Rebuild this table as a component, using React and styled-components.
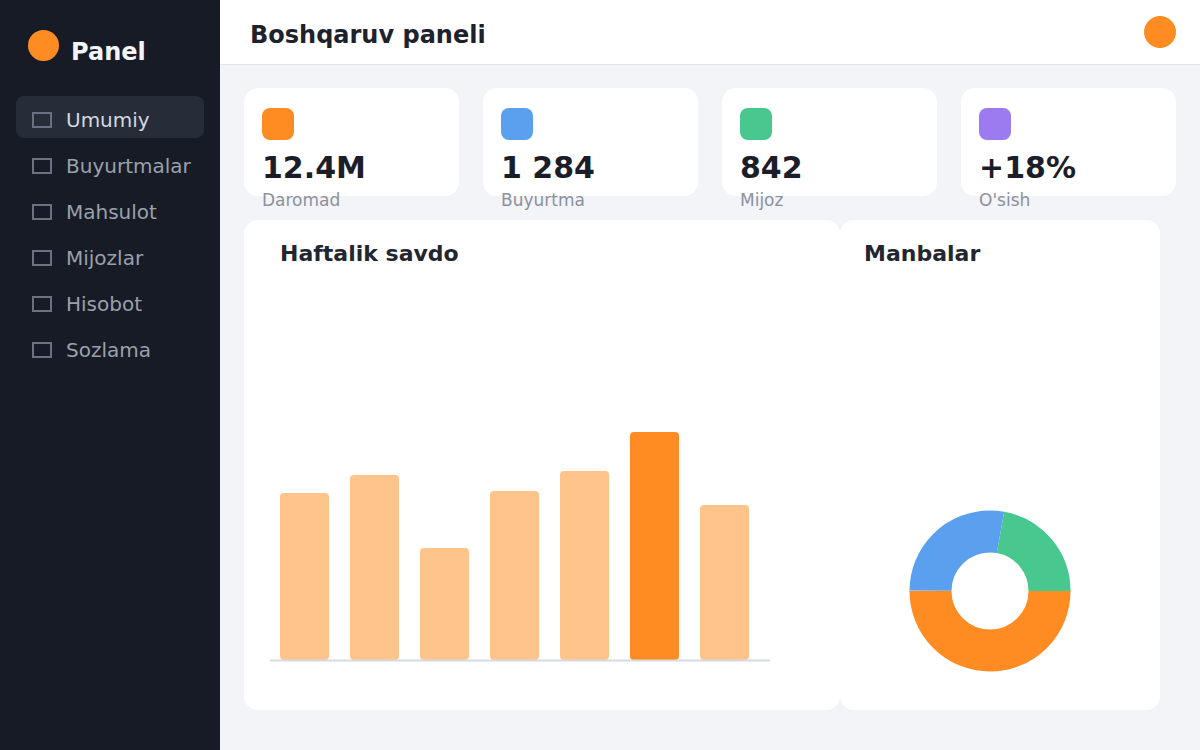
import React from "react";
import styled, { createGlobalStyle } from "styled-components";

const navItems = ["Umumiy", "Buyurtmalar", "Mahsulot", "Mijozlar", "Hisobot", "Sozlama"];

const stats = [
  { value: "12.4M", label: "Daromad", color: "#ff8c22" },
  { value: "1 284", label: "Buyurtma", color: "#5aa0ef" },
  { value: "842", label: "Mijoz", color: "#48c78e" },
  { value: "+18%", label: "O'sish", color: "#9b7bef" },
];

// bar tops measured against a 390px baseline
const bars = [167, 185, 112, 169, 189, 228, 155];
const HIGHLIGHT = 5;

const sources = [
  { share: 0.5, color: "#ff8c22" },
  { share: 0.277, color: "#5aa0ef" },
  { share: 0.223, color: "#48c78e" },
];

const App = () => {
  const radius = 59.5;
  const circ = 2 * Math.PI * radius;
  let start = 0;

  return (
    <>
      <GlobalStyle />
      <Shell>
        <Sidebar>
          <Brand>
            <BrandDot />
            <BrandName>Panel</BrandName>
          </Brand>
          <Nav>
            {navItems.map((item, i) => (
              <NavItem key={item} $active={i === 0}>
                <NavIcon />
                {item}
              </NavItem>
            ))}
          </Nav>
        </Sidebar>

        <Main>
          <Header>
            <Title>Boshqaruv paneli</Title>
            <Avatar />
          </Header>

          <Content>
            <StatGrid>
              {stats.map((s) => (
                <StatCard key={s.label}>
                  <StatIcon $color={s.color} />
                  <StatValue>{s.value}</StatValue>
                  <StatLabel>{s.label}</StatLabel>
                </StatCard>
              ))}
            </StatGrid>

            <ChartRow>
              <ChartCard>
                <ChartTitle $indent={36}>Haftalik savdo</ChartTitle>
                <BarChart width="510" height="392" viewBox="0 0 510 392">
                  {bars.map((h, i) => (
                    <rect
                      key={i}
                      x={10 + i * 70}
                      y={390 - h}
                      width="49"
                      height={h}
                      rx="4"
                      fill={i === HIGHLIGHT ? "#ff8c22" : "#fec48c"}
                    />
                  ))}
                  <line x1="0" y1="390.5" x2="500" y2="390.5" stroke="#d6d9e0" strokeWidth="2" />
                </BarChart>
              </ChartCard>

              <ChartCard>
                <ChartTitle $indent={24}>Manbalar</ChartTitle>
                <Donut width="170" height="170" viewBox="0 0 170 170">
                  {sources.map((s) => {
                    const len = s.share * circ;
                    const seg = (
                      <circle
                        key={s.color}
                        cx="85"
                        cy="85"
                        r={radius}
                        fill="none"
                        stroke={s.color}
                        strokeWidth="42"
                        strokeDasharray={`${len} ${circ}`}
                        strokeDashoffset={-start}
                      />
                    );
                    start += len;
                    return seg;
                  })}
                </Donut>
              </ChartCard>
            </ChartRow>
          </Content>
        </Main>
      </Shell>
    </>
  );
};

const GlobalStyle = createGlobalStyle`
  body {
    margin: 0;
    font-family: "DejaVu Sans", "Noto Sans", sans-serif;
    background: #f3f4f8;
  }
`;

const Shell = styled.div`
  display: flex;
  width: 1200px;
  height: 750px;
  overflow: hidden;
`;

const Sidebar = styled.aside`
  flex: none;
  width: 220px;
  background: #171b26;
  padding: 0 16px;
  box-sizing: border-box;
`;

const Brand = styled.div`
  display: flex;
  align-items: flex-start;
  padding: 30px 0 0 12px;
`;

const BrandDot = styled.div`
  width: 31px;
  height: 31px;
  border-radius: 50%;
  background: #ff8c22;
`;

const BrandName = styled.div`
  margin: 8px 0 0 12px;
  font-size: 24px;
  line-height: 28px;
  font-weight: bold;
  color: #f3f4f6;
`;

const Nav = styled.nav`
  display: flex;
  flex-direction: column;
  gap: 4px;
  margin-top: 30px;
`;

const NavItem = styled.div`
  display: flex;
  align-items: center;
  gap: 14px;
  height: 42px;
  padding: 6px 0 0 16px;
  box-sizing: border-box;
  border-radius: 8px;
  font-size: 20px;
  color: ${(p) => (p.$active ? "#d4d8e0" : "#9aa0ad")};
  background: ${(p) => (p.$active ? "#272c39" : "transparent")};
`;

const NavIcon = styled.span`
  width: 20px;
  height: 16px;
  box-sizing: border-box;
  border: 2px solid #6b7181;
`;

const Main = styled.main`
  flex: 1;
  display: flex;
  flex-direction: column;
  background: #f3f4f8;
`;

const Header = styled.header`
  display: flex;
  align-items: center;
  justify-content: space-between;
  height: 64px;
  padding: 0 24px 0 30px;
  background: #ffffff;
  border-bottom: 1px solid #e3e5ea;
`;

const Title = styled.h1`
  margin: 6px 0 0;
  font-size: 24px;
  font-weight: bold;
  color: #1e222d;
`;

const Avatar = styled.div`
  width: 32px;
  height: 32px;
  border-radius: 50%;
  background: #ff8c22;
`;

const Content = styled.div`
  padding: 23px 24px 0;
`;

const StatGrid = styled.div`
  display: grid;
  grid-template-columns: repeat(4, 1fr);
  gap: 24px;
`;

const StatCard = styled.div`
  height: 108px;
  box-sizing: border-box;
  padding: 20px 18px;
  background: #ffffff;
  border-radius: 14px;
`;

const StatIcon = styled.div`
  width: 32px;
  height: 32px;
  border-radius: 8px;
  background: ${(p) => p.$color};
`;

const StatValue = styled.div`
  margin-top: 10px;
  font-size: 30px;
  font-weight: bold;
  color: #1b1e28;
`;

const StatLabel = styled.div`
  margin-top: 5px;
  font-size: 17px;
  color: #8c919d;
`;

const ChartRow = styled.div`
  display: grid;
  grid-template-columns: 596px 320px;
  height: 490px;
  margin-top: 24px;
`;

const ChartCard = styled.section`
  display: flex;
  flex-direction: column;
  padding-top: 21px;
  background: #ffffff;
  border-radius: 14px;
`;

const ChartTitle = styled.h2`
  margin: 0;
  padding-left: ${(p) => p.$indent}px;
  font-size: 22px;
  font-weight: bold;
  color: #23262f;
`;

const BarChart = styled.svg`
  display: block;
  margin: 4px 0 0 26px;
`;

const Donut = styled.svg`
  display: block;
  margin: 240px 0 0 65px;
`;

export default App;
